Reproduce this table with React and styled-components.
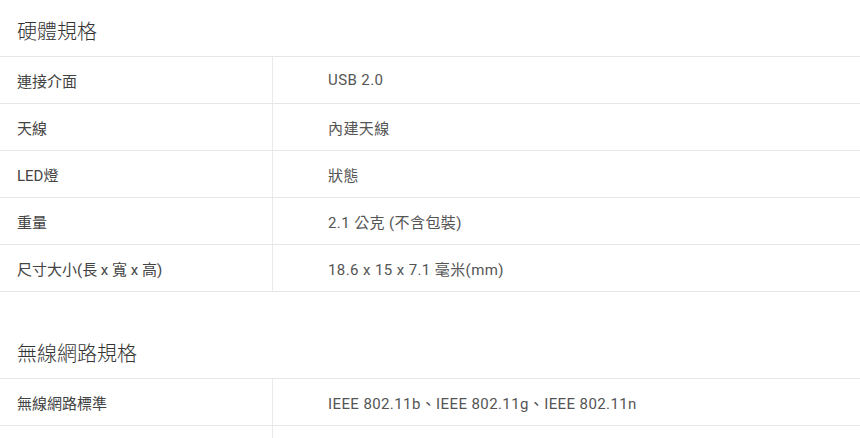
import React from "react";
import styled, { createGlobalStyle } from "styled-components";

const GlobalStyle = createGlobalStyle`
  body {
    margin: 0;
    background: #fff;
    font-family: Roboto, "Noto Sans CJK TC", sans-serif;
  }
`;

const Page = styled.div`
  width: 860px;
`;

const Section = styled.section`
  & + & {
    margin-top: 30px;
  }
`;

const SectionTitle = styled.h2`
  margin: 0;
  padding: 18px 17px 10px;
  font-size: 20px;
  line-height: 28px;
  font-weight: 300;
  color: #333;
  border-bottom: 1px solid #e6e6ea;
`;

const Row = styled.div`
  display: grid;
  grid-template-columns: 272px 1fr;
  border-bottom: 1px solid #e6e6ea;
`;

const Cell = styled.div`
  height: 46px;
  display: flex;
  align-items: center;
  font-size: 15px;
  color: ${(p) => (p.$value ? "#555" : "#444")};
  letter-spacing: ${(p) => (p.$value ? "0.4px" : "0")};
  padding-left: ${(p) => (p.$value ? "55px" : "17px")};
  border-left: ${(p) => (p.$value ? "1px solid #eaeaee" : "none")};
`;

const specs = [
  {
    title: "硬體規格",
    rows: [
      ["連接介面", "USB 2.0"],
      ["天線", "內建天線"],
      ["LED燈", "狀態"],
      ["重量", "2.1 公克 (不含包裝)"],
      ["尺寸大小(長 x 寬 x 高)", "18.6 x 15 x 7.1 毫米(mm)"],
    ],
  },
  {
    title: "無線網路規格",
    rows: [
      ["無線網路標準", "IEEE 802.11b、IEEE 802.11g、IEEE 802.11n"],
      ["", ""],
    ],
  },
];

export default function App() {
  return (
    <Page>
      <GlobalStyle />
      {specs.map((s) => (
        <Section key={s.title}>
          <SectionTitle>{s.title}</SectionTitle>
          {s.rows.map(([k, v], i) => (
            <Row key={i}>
              <Cell>{k}</Cell>
              <Cell $value>{v}</Cell>
            </Row>
          ))}
        </Section>
      ))}
    </Page>
  );
}
